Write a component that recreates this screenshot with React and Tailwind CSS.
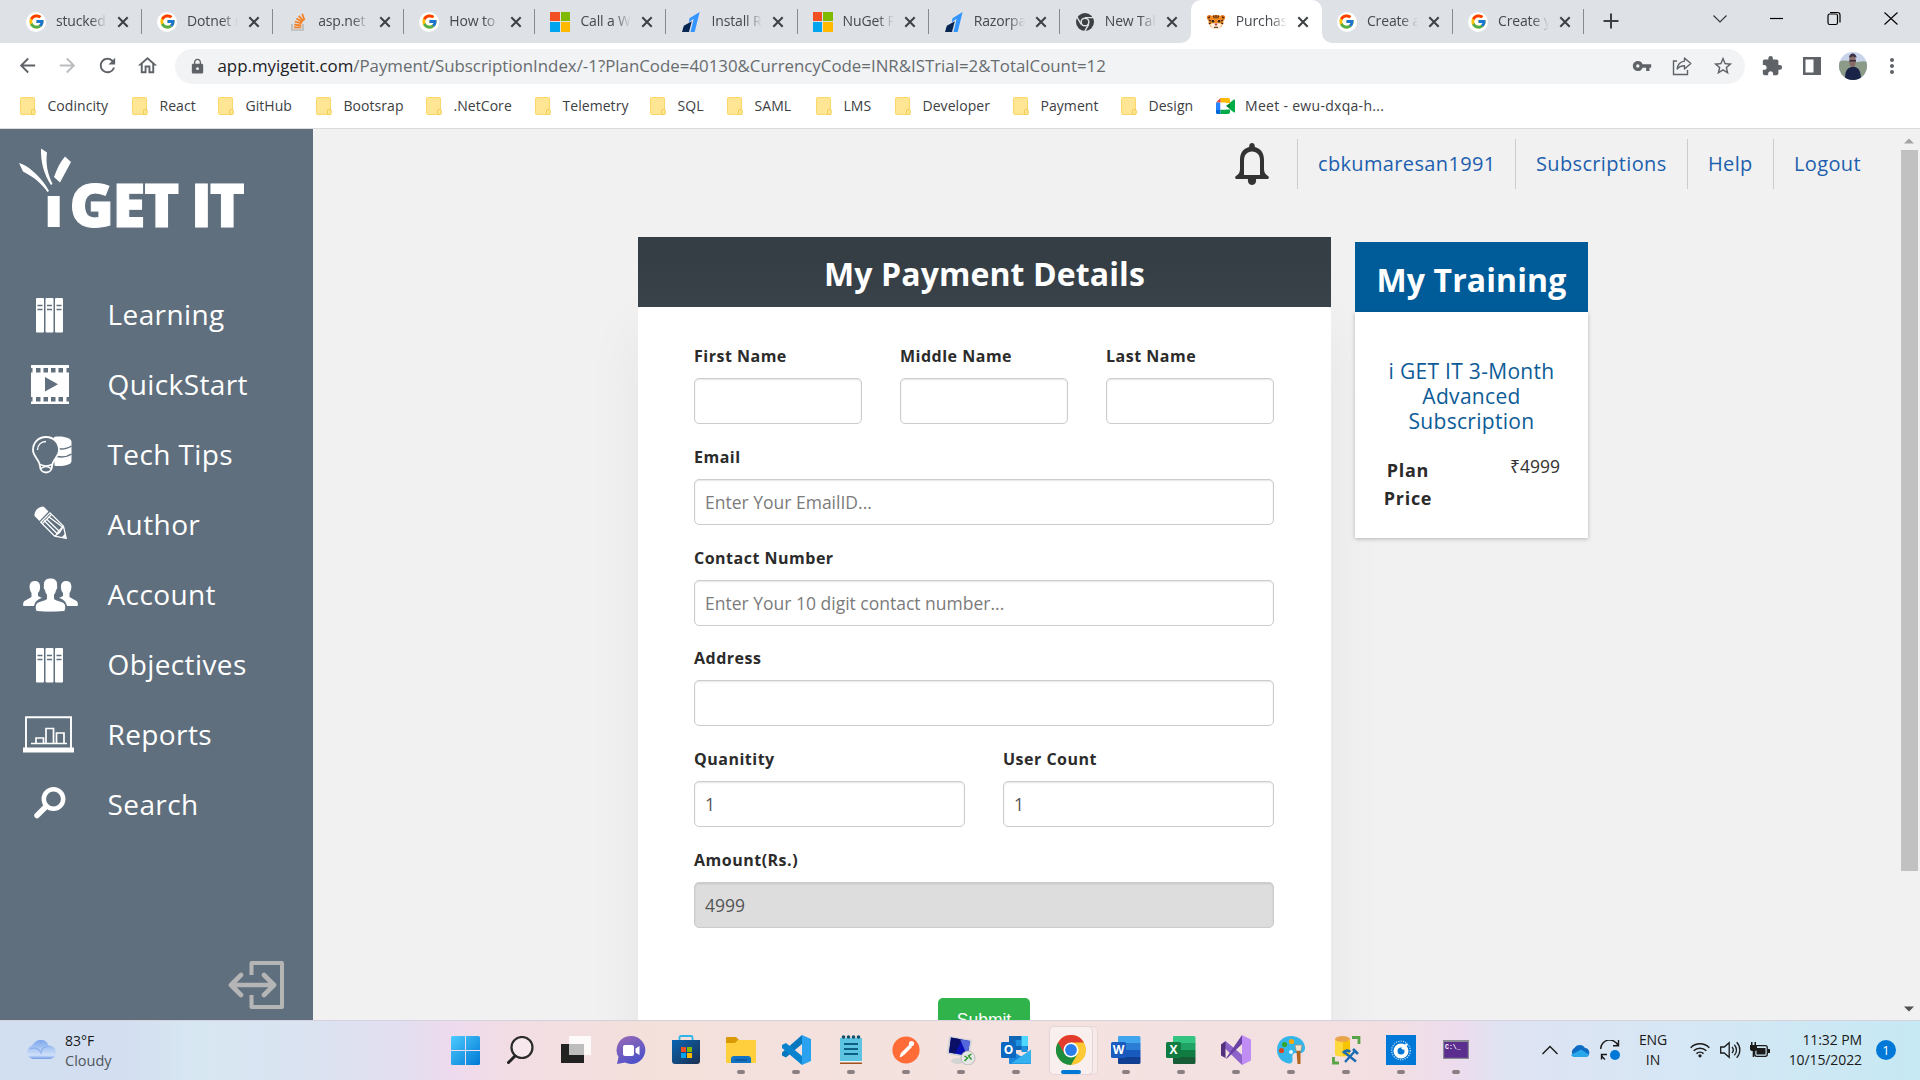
import React from "react";
import { FcGoogle } from "react-icons/fc";
import { MdVpnKey, MdStarBorder, MdExtension, MdLock, MdArrowBack, MdArrowForward, MdRefresh, MdOutlineHome, MdMoreVert } from "react-icons/md";

/* ---------- favicons ---------- */
const Google = () => (
  <span className="flex h-5 w-5 items-center justify-center rounded-full bg-white"><FcGoogle size={17} /></span>
);
const StackOverflow = () => (
  <svg width="20" height="20" viewBox="0 0 20 20" fill="none">
    <path d="M4 12v6h11v-6" stroke="#bcbbbb" strokeWidth="1.7" />
    <g stroke="#f48024" strokeWidth="1.8">
      <path d="M6 15.4h7.2M6.2 12.6l7.1.8M6.9 9.6l6.8 1.9M8.4 6.5l6.1 3.6M10.8 3.8l4.6 5.4M14.2 1.8l2.3 6.4" />
    </g>
  </svg>
);
const Microsoft = () => (
  <span className="grid h-5 w-5 grid-cols-2 gap-[1px]">
    <i className="bg-[#f25022]" /><i className="bg-[#7fba00]" /><i className="bg-[#00a4ef]" /><i className="bg-[#ffb900]" />
  </span>
);
const Razorpay = () => (
  <svg width="20" height="20" viewBox="0 0 20 20">
    <path d="M8.5 6.2 18.6 0l-4.9 20H9.5l3.2-13.2-4.9 3.4z" fill="#3395ff" />
    <path d="m2.8 13.8 8-4.6L8 20H1z" fill="#072654" />
  </svg>
);
const ChromeGrey = () => (
  <svg width="20" height="20" viewBox="0 0 20 20">
    <circle cx="10" cy="10" r="9" fill="#3c4043" />
    <circle cx="10" cy="10" r="4.6" fill="#dee1e6" />
    <circle cx="10" cy="10" r="3.1" fill="#3c4043" />
    <path d="M10 5.6h8.2M6.2 12.3 2 5.2M13.8 12.3l-4.2 7" stroke="#dee1e6" strokeWidth="1.4" />
  </svg>
);
const Tiger = () => (
  <svg width="20" height="20" viewBox="0 0 20 20">
    <circle cx="3.4" cy="5.6" r="2.6" fill="#e8781c" /><circle cx="16.6" cy="5.6" r="2.6" fill="#e8781c" />
    <circle cx="3.4" cy="5.6" r="1.2" fill="#3a1d0c" /><circle cx="16.6" cy="5.6" r="1.2" fill="#3a1d0c" />
    <path d="M10 3c4.600 0 7.500 2.600 7.500 6.600S14 17 10 17s-7.500-3.400-7.500-7.400S5.400 3 10 3z" fill="#f58a22" />
    <path d="M4 12c2-1 4-1 6-1s4 0 6 1c-1 3.500-3.500 5-6 5s-5-1.500-6-5z" fill="#fff1dc" />
    <path d="M10 3v3.500M7.500 3.500 8.300 6M12.500 3.500 11.700 6M2.800 8l2.400 1M17.200 8l-2.400 1M2.800 11.500 5 11M17.200 11.500 15 11" stroke="#3a1d0c" strokeWidth="1.1" />
    <circle cx="7" cy="9.300" r="1.200" fill="#222" /><circle cx="13" cy="9.300" r="1.200" fill="#222" />
    <path d="M8.300 11.600h3.400L10 14z" fill="#b3261e" />
    <path d="M8 15.300h4" stroke="#3a1d0c" strokeWidth="1" />
  </svg>
);

const tabs = [
  [Google, "stucked"], [Google, "Dotnet r"], [StackOverflow, "asp.net"], [Google, "How to"],
  [Microsoft, "Call a We"], [Razorpay, "Install R"], [Microsoft, "NuGet P"], [Razorpay, "Razorpay"],
  [ChromeGrey, "New Tab"], [Tiger, "Purchase"], [Google, "Create a"], [Google, "Create y"],
];

const XIcon = () => (
  <svg width="12" height="12" viewBox="0 0 12 12" stroke="#3c4043" strokeWidth="2"><path d="m1.300 1.300 9.400 9.400M10.700 1.300 1.300 10.700" /></svg>
);

function TabStrip() {
  return (
    <div className="flex h-[43px] bg-[#dee1e6]">
      <div className="flex pl-[11px]">
        {tabs.map(([Icon, title], i) => {
          const active = i === 9;
          return (
            <div key={i} className={"relative flex h-[43px] w-[131.1px] shrink-0 items-center pl-[15px] " + (active ? "rounded-t-[10px] bg-white" : "")}>
              <Icon />
              <span className="ml-[10px] mb-px w-[51px] overflow-hidden whitespace-nowrap text-[14px] leading-5 tracking-[-0.15px] text-[#45494d] [mask-image:linear-gradient(to_right,#000_68%,transparent)]">{title}</span>
              <span className="ml-[10px]"><XIcon /></span>
              {i !== 8 && !active && <i className="absolute right-0 top-[9px] h-[25px] w-px bg-[#868a8f]" />}
              {active && (
                <>
                  <svg className="absolute bottom-0 -left-[10px]" width="10" height="10"><path d="M10 0v10H0A10 10 0 0 0 10 0z" fill="#fff" /></svg>
                  <svg className="absolute bottom-0 -right-[10px]" width="10" height="10"><path d="M0 0v10h10A10 10 0 0 1 0 0z" fill="#fff" /></svg>
                </>
              )}
            </div>
          );
        })}
      </div>
      <svg className="ml-[19px] mt-[13px]" width="16" height="16" stroke="#3c4043" strokeWidth="2"><path d="M8 0.500v15M0.500 8h15" /></svg>
      <div className="ml-auto flex gap-[37px] pr-[19px] pt-[8px]">
        <svg width="20" height="20" fill="none" stroke="#333" strokeWidth="1.100"><path d="m3.500 7.500 6.500 6.500 6.500-6.500" /></svg>
        <svg width="20" height="20" fill="none" stroke="#000" strokeWidth="1.200"><path d="M3 10.500h13" /></svg>
        <svg width="20" height="20" fill="none" stroke="#000" strokeWidth="1.200"><rect x="4" y="6" width="9.500" height="10.500" rx="1.800" /><path d="M6 4.500h7.500a2.500 2.500 0 0 1 2.500 2.500v7.500" /></svg>
        <svg width="20" height="20" fill="none" stroke="#000" strokeWidth="1.100"><path d="m3.500 4.500 13 12M16.500 4.500l-13 12" /></svg>
      </div>
    </div>
  );
}

function Toolbar() {
  return (
    <div className="flex h-[45px] items-center bg-white pl-[16px] text-[#5f6368]">
      <div className="flex w-[159px] gap-[17px]">
        <MdArrowBack size={23} /><MdArrowForward size={23} color="#babcbe" /><MdRefresh size={23} /><MdOutlineHome size={23} />
      </div>
      <div className="mt-px flex h-[35px] w-[1570px] items-center rounded-full bg-[#f1f3f4] pl-[14px]">
        <MdLock size={17} />
        <div className="ml-[11.500px] mb-px whitespace-nowrap text-[16.850px] leading-6 text-[#686c70]">
          <span className="text-[#202124]">app.myigetit.com</span>/Payment/SubscriptionIndex/-1?PlanCode=40130&amp;CurrencyCode=INR&amp;ISTrial=2&amp;TotalCount=12
        </div>
        <div className="ml-auto flex items-center gap-[20px] pr-[11px]">
          <MdVpnKey size={20} />
          <svg width="20" height="20" viewBox="0 0 20 20" fill="none" stroke="#5f6368" strokeWidth="1.400">
            <path d="M5 5H1.500v13.500h14V14" /><path d="M12.500 2l6.300 5.500-6.300 5.500v-3.200c-3.400 0-5.800 1-7.300 3.200.5-4.600 2.800-7.300 7.300-7.900z" strokeLinejoin="round" />
          </svg>
          <MdStarBorder size={22} />
        </div>
      </div>
      <MdExtension className="ml-[16px]" size={22} />
      <svg className="ml-[20px]" width="18" height="18"><path d="M0 0h18v18H0z" fill="#5f6368" /><path d="M2.500 2.500h8v13h-8z" fill="#fff" /></svg>
      <svg className="ml-[18px]" width="28" height="28" viewBox="0 0 28 28">
        <defs><clipPath id="av"><circle cx="14" cy="14" r="14" /></clipPath></defs>
        <g clipPath="url(#av)">
          <path d="M0 0h28v28H0z" fill="#c8d3ea" /><path d="M0 10c5-3 9-1 14 0s10-2 14 0v18H0z" fill="#8c9a88" />
          <path d="M6 28c0-8 1-12 8-13.500 6 .5 8 5 8 13.500z" fill="#1a2348" />
          <ellipse cx="13.500" cy="9" rx="3.400" ry="6" fill="#8a6a66" /><path d="M10 6c0-6 7.500-6 7.500 0-3-2-5-2-7.500 0z" fill="#3a3244" />
          <path d="M10.500 8.800h6.500" stroke="#322c3c" strokeWidth="1.400" />
        </g>
      </svg>
      <MdMoreVert className="ml-[13px]" size={24} />
    </div>
  );
}

const bookmarks = [
  ["Codincity", "w-[112px]"], ["React", "w-[86px]"], ["GitHub", "w-[98px]"], ["Bootsrap", "w-[110px]"], [".NetCore", "w-[109px]"],
  ["Telemetry", "w-[115px]"], ["SQL", "w-[77px]"], ["SAML", "w-[89px]"], ["LMS", "w-[79px]"], ["Developer", "w-[118px]"],
  ["Payment", "w-[108px]"], ["Design", "w-[95px]"], ["Meet - ewu-dxqa-h...", "w-[200px]"],
];
function Bookmarks() {
  return (
    <div className="flex h-[41px] items-center border-b border-[#dcdcdf] bg-white pb-[4px] pl-[20px]">
      {bookmarks.map(([t, w], i) => (
        <div key={i} className={"flex shrink-0 items-center whitespace-nowrap text-[14px] leading-5 text-[#3c4043] " + w}>
          {i < 12 ? (
            <svg width="16" height="18" viewBox="0 0 16 18"><rect x=".5" y=".5" width="14" height="17" rx="1" fill="#ffe694" stroke="#fbd768" /><rect x="11.500" y="12.500" width="3.700" height="5" rx="1" fill="#ffe694" stroke="#f2c94c" /></svg>
          ) : (
            <svg width="19" height="16" viewBox="0 0 19 16">
              <path d="M4.500 0H12a2 2 0 0 1 2 2v3H4.500z" fill="#ffba00" /><path d="M0 4.500 4.500 0v4.500z" fill="#ea4335" />
              <path d="M0 4.500h4.500V12H0z" fill="#2684fc" /><path d="M0 12h4.500v4H1.500A1.500 1.500 0 0 1 0 14.500z" fill="#0066da" />
              <path d="M4.500 11.500H14V14a2 2 0 0 1-2 2H4.500z" fill="#00ac47" /><path d="M14 5v6l-4-3z" fill="#00832d" /><path d="m14 4.500 4-3c.4-.3 1 0 1 .5v12c0 .5-.6.800-1 .5l-4-3z" fill="#00ac47" /><path d="M4.500 4.500H10v7H4.500z" fill="#fff" />
            </svg>
          )}
          <span className={i < 12 ? "ml-[11.500px] tracking-[0.05px]" : "ml-[10px] tracking-[0.3px]"}>{t}</span>
        </div>
      ))}
    </div>
  );
}

/* ---------- sidebar icons ---------- */
const Books = () => (
  <svg width="27" height="35" viewBox="0 0 27 35">
    {[0, 9.500, 19].map((x) => (
      <g key={x}><rect x={x} y="0" width="8" height="34.500" rx="1" fill="#fff" /><path d={`M${x + 1.500} 7.500h5M${x + 1.500} 11.500h5`} stroke="#5f6f7e" strokeWidth="1.300" /></g>
    ))}
  </svg>
);
const Film = () => (
  <svg width="38" height="39" viewBox="0 0 38 39">
    <path d="M0 0h38v39H0z" fill="#fff" />
    {[5, 12.500, 20, 27.500].map((x) => (
      <g key={x} fill="#5f6f7e"><rect x={x} y="3" width="4.500" height="4.500" /><rect x={x} y="32" width="4.500" height="4.500" /></g>
    ))}
    <g fill="#5f6f7e"><rect x="0" y="3" width="1.500" height="4.500" /><rect x="0" y="32" width="1.500" height="4.500" /><rect x="35.500" y="3" width="2.500" height="4.500" /><rect x="35.500" y="32" width="2.500" height="4.500" /></g>
    <path d="M14 12v14.500l13-7.200z" fill="#5f6f7e" />
  </svg>
);
const Bulb = () => (
  <svg width="40" height="38" viewBox="0 0 40 38" fill="none">
    <path d="M22 1c9-1.500 17.500 1 17.500 5v19c0 4-9 5.800-17 4.800z" fill="#fff" />
    <path d="M24 12.500c6 1 12 0 15.500-2.500M25 20.500c5 .8 11 0 14.500-2.500" stroke="#5f6f7e" strokeWidth="1.500" />
    <path d="M14 1c-8 0-13 6-13 13 0 6.500 6.500 9.500 7 16 0 4 2.500 6.500 6 6.500s6-2.500 6-6.500c.5-6.500 7-9.500 7-16 0-7-5-13-13-13z" fill="#5f6f7e" stroke="#fff" strokeWidth="1.800" />
    <path d="M5.500 14c0-5 3.500-8.500 8.500-8.500M8 28.500c4 1.800 8 1.800 12 0M9 32.500c3-2.500 7-2.500 10 0" stroke="#fff" strokeWidth="1.400" />
  </svg>
);
const Pencil = () => (
  <svg width="33" height="33" viewBox="0 0 33 33" fill="none">
    <path d="M0.500 8.500C1 4 5 .5 9.500.5l5 5L5.500 15l-5-5z" fill="#fff" />
    <path d="M6.800 16.200 16 6.800l13.500 13.500 2.700 12-11.500-2.200z" stroke="#fff" strokeWidth="1.300" />
    <path d="m8.500 17.500 9-9M10 14.500l13 13 5.500-6.500L15 11M12.500 13l12.500 12M21 30l4.500-3.500L29 21" stroke="#fff" strokeWidth="1.300" /><path d="m27.500 31.500 4.700.8-1-4.800z" fill="#fff" />
  </svg>
);
const People = () => (
  <svg width="55" height="34" viewBox="0 0 55 34" fill="#fff">
    <path d="M11.500 3c4 0 6 2.500 5.500 7 0 2-1 4-2 5v3l4 2c-5 1.500-7 4-8 8H1c-1.500 0-1-4 .5-5L8.500 19v-4C6 12 5 3 11.500 3z" />
    <path d="M43.500 3c-4 0-6 2.500-5.500 7 0 2 1 4 2 5v3l-4 2c5 1.500 7 4 8 8h10c1.500 0 1-4-.5-5L46.500 19v-4C49 12 50 3 43.500 3z" />
    <path d="M27.500 0c5 0 7.500 3 7 8 .8 1 .2 3-1 4-.3 2-1 3.500-2 4.500v4.500c3 2 9.500 2 11 6 .5 2 .3 6-1.500 6.500-8 .8-20 .8-27 0C12 33 12 29 12.500 27c1.500-4 8-4 11-6v-4.500c-1-1-1.700-2.500-2-4.500-1.200-1-1.800-3-1-4-.5-5 2-8 7-8z" stroke="#5f6f7e" strokeWidth="1" />
  </svg>
);
const Report = () => (
  <svg width="51" height="37" viewBox="0 0 51 37" fill="none" stroke="#fff">
    <path d="M3 32V1.300h45V32" strokeWidth="1.900" /><path d="M0 34h51" strokeWidth="5" />
    <path d="M8 27.500h36M13 27v-5h7.500v5M23 27V12.500h7.500V27M33.500 27V17H41v10" strokeWidth="1.700" />
  </svg>
);
const SearchBig = () => (
  <svg width="32" height="32" viewBox="0 0 32 32" fill="none" stroke="#fff" strokeLinecap="round"><circle cx="19.500" cy="12" r="9.700" strokeWidth="4.500" /><path d="m12 19.500-9 9" strokeWidth="5.500" /></svg>
);

const menu = [
  [Books, "Learning", "", ""], [Film, "QuickStart", "", "-mt-[2px]"], [Bulb, "Tech Tips", "pl-[4px]", ""], [Pencil, "Author", "pl-px", "-mt-[5px]"],
  [People, "Account", "pl-px", "-mt-[1px]"], [Books, "Objectives", "", ""], [Report, "Reports", "pr-[3px]", "-mt-[1px]"], [SearchBig, "Search", "", "-mt-[5px]"],
];

function Sidebar() {
  return (
    <aside className="flex w-[313px] shrink-0 flex-col bg-[#5f6f7e]">
      <svg className="shrink-0" width="260" height="110" viewBox="0 129 260 110" fill="#fff" fontFamily="'Open Sans', sans-serif" fontWeight="800" fontSize="60">
        <path d="M19 163c5 1.500 9 4 13 7.500 8 7 13 13 17 20.500l-1.500 1C42 184 34 177 23 171.500z" />
        <path d="M41 148.500l6 4c-1.500 11 .5 21 5.500 31.500l-1.500 1C44 175 40.500 161 41 148.500z" />
        <path d="M65 156.500l6 5.500-11 20.500-6-5.500c3-8 6-15 11-20.500z" />
        <path d="M47.700 196h12v31h-12z" />
        <text x="69.500" y="227" textLength="110" stroke="#fff" strokeWidth="1">GET</text>
        <text x="191" y="227" textLength="54" stroke="#fff" strokeWidth="1">IT</text>
      </svg>
      <nav className="mt-[41px] flex flex-col">
        {menu.map(([Icon, label, pad, top], i) => (
          <div key={i} className="flex h-[70px] items-center">
            <span className={"flex w-[99px] justify-center " + pad + " " + top}><Icon /></span>
            <span className="ml-[8.500px] pb-[3px] text-[28px] leading-[38px] tracking-[0.4px] text-white">{label}</span>
          </div>
        ))}
      </nav>
      <svg className="mb-[10px] ml-auto mr-[28px] mt-auto" width="58" height="50" viewBox="0 0 58 50" fill="none" stroke="#b5b5b5" strokeWidth="4">
        <path d="M24.500 15V3H55v44H24.500V35" strokeLinejoin="round" /><path d="M5 25h42M14 15 4 25l10 10M37 15l10 10-10 10" strokeWidth="4.600" strokeLinecap="round" strokeLinejoin="round" />
      </svg>
    </aside>
  );
}

const inputBase = "mt-[11px] flex h-[46px] items-center rounded-[5px] border border-[#ccc] px-[10px] text-[17.5px] leading-6 shadow-[inset_0_1px_2px_rgba(0,0,0,0.1)] ";
function Field({ label, value, placeholder, grey }) {
  return (
    <div className="flex-1">
      <div className="h-[22px] text-[16px] font-bold leading-[22px] tracking-[0.5px] text-[#2b2b2b]">{label}</div>
      <div className={inputBase + (grey ? "bg-[#ddd]" : "bg-white")}>
        {placeholder ? <span className="text-[#7b7b7b]">{placeholder}</span> : <span className="text-[#555]">{value}</span>}
      </div>
    </div>
  );
}

function Main() {
  return (
    <main className="flex min-w-0 flex-1 flex-col overflow-hidden bg-[#f1f1f1]">
      <div className="mt-[10px] flex h-[50px] shrink-0 items-center justify-end pr-[19px]">
        <svg className="mr-[28px]" width="34" height="43" viewBox="0 0 34 43">
          <path d="M17 0c2 0 3 1.500 2.800 4C26 5.500 29 10 29 17v9c0 3 1 5 4 7 1.500 1 1 3-.5 3H1.500c-1.500 0-2-2-.5-3 3-2 4-4 4-7v-9C5 10 8 5.500 14.200 4 14 1.500 15 0 17 0z" fill="#333" />
          <path d="M17 8.500c-5 0-8 3.500-8 9V32h16V17.500c0-5.500-3-9-8-9z" fill="#f1f1f1" /><path d="M13 36h8c.5 3-1 6-4 6s-4.500-3-4-6z" fill="#333" />
        </svg>
        {[["cbkumaresan1991", "w-[218px]"], ["Subscriptions", "w-[172px]"], ["Help", "w-[86px]"], ["Logout", "w-[107px]"]].map(([t, w]) => (
          <a key={t} className={"flex h-[50px] items-center border-l border-[#ccc] pl-[20px] text-[20px] leading-6 tracking-[0.35px] text-[#1d5fae] " + w}>{t}</a>
        ))}
      </div>
      <div className="flex pl-[325px] pt-[48px]">
        <section className="w-[693px] shrink-0">
          <h2 className="flex h-[70px] items-center justify-center bg-[linear-gradient(#343e44_40%,#3a444a)] pt-[4px] text-[32px] font-bold tracking-[0.1px] text-white">My Payment Details</h2>
          <div className="flex h-[800px] flex-col gap-[21.800px] rounded-t-[4px] bg-white pl-[56px] pr-[57px] pt-[38px] shadow-[0_20px_60px_rgba(0,0,0,0.05)]">
            <div className="flex gap-[38px]"><Field label="First Name" /><Field label="Middle Name" /><Field label="Last Name" /></div>
            <div className="flex"><Field label="Email" placeholder="Enter Your EmailID..." /></div>
            <div className="flex"><Field label="Contact Number" placeholder="Enter Your 10 digit contact number..." /></div>
            <div className="flex"><Field label="Address" /></div>
            <div className="flex gap-[38px]"><Field label="Quanitity" value="1" /><Field label="User Count" value="1" /></div>
            <div className="flex"><Field label="Amount(Rs.)" value="4999" grey /></div>
            <button className="mx-auto mt-[48px] h-[44px] w-[92px] shrink-0 rounded-[5px] bg-[#2fb34a] font-['Liberation_Sans',sans-serif] text-[17.5px] text-white">Submit</button>
          </div>
        </section>
        <section className="ml-[24px] mt-[5px] w-[233px] shrink-0">
          <h2 className="flex h-[70px] items-center justify-center bg-[#005c99] pt-[5px] text-[32px] font-bold tracking-[0.1px] text-white">My Training</h2>
          <div className="h-[226px] bg-white pt-[47px] shadow-[0_1px_4px_rgba(0,0,0,0.25)]">
            <p className="text-center text-[21px] leading-[25px] tracking-[0.3px] text-[#0d5c97]">i GET IT 3-Month<br />Advanced<br />Subscription</p>
            <div className="mt-[22px] flex">
              <b className="w-[106px] text-center text-[18px] leading-[28px] tracking-[0.7px] text-[#2b2b2b]">Plan<br />Price</b>
              <span className="ml-[49px] -mt-[3px] text-[17.5px] leading-[26px] text-[#333]">₹4999</span>
            </div>
          </div>
        </section>
      </div>
    </main>
  );
}

function Scrollbar() {
  return (
    <div className="flex w-[21px] shrink-0 flex-col items-center bg-[#f1f1f1] pr-px">
      <svg className="mt-[9px]" width="10" height="6"><path d="M5 .5 10 5.500H0z" fill="#a3a3a3" /></svg>
      <div className="mt-[6px] h-[721px] w-[17px] bg-[#c1c1c1]" />
      <svg className="mb-[8px] mt-auto" width="10" height="6"><path d="M5 5.500 10 .5H0z" fill="#505050" /></svg>
    </div>
  );
}

/* ---------- taskbar icons ---------- */
const S = ({ children, w = 30, h = 30 }) => <svg width={w} height={h} viewBox={`0 0 ${w} ${h}`}>{children}</svg>;
const officeText = { fontFamily: "'Open Sans', sans-serif", fontWeight: 700, fontSize: 12, fill: "#fff", textAnchor: "middle" };
const WinLogo = () => (
  <S w={29} h={29}>
    <defs><linearGradient id="wl" x1="0" y1="0" x2="1" y2="1" gradientUnits="objectBoundingBox"><stop stopColor="#4ccbff" /><stop offset="1" stopColor="#0078d4" /></linearGradient></defs>
    <path d="M1.500 0H14v14H0V1.500A1.500 1.500 0 0 1 1.500 0zM15 0h12.500A1.500 1.500 0 0 1 29 1.500V14H15zM0 15h14v14H1.500A1.500 1.500 0 0 1 0 27.500zM15 15h14v12.500a1.500 1.500 0 0 1-1.500 1.500H15z" fill="url(#wl)" />
  </S>
);
const TSearch = () => <S w={27} h={28}><circle cx="15" cy="11.500" r="10.500" fill="#ffffff55" stroke="#2b2b2b" strokeWidth="2.200" /><path d="m8 20-6.500 6.500" stroke="#222" strokeWidth="3" strokeLinecap="round" /></S>;
const TaskView = () => <S><path d="M0 9h23v19H0z" fill="#222" /><path d="M8 1h22v19H8z" fill="#fff" fillOpacity=".85" /><path d="M8 9h15v11H8z" fill="#bdbdbd" /></S>;
const Chat = () => (
  <S><defs><linearGradient id="ch" x1="0" y1="0" x2="0.500" y2="1"><stop stopColor="#9b6bb5" /><stop offset="1" stopColor="#4f52c8" /></linearGradient></defs>
    <path d="M15 1a14 14 0 1 1-6 26.500L1 29l1.500-7A14 14 0 0 1 15 1z" fill="url(#ch)" /><rect x="7" y="10" width="11" height="11" rx="2" fill="#fff" /><path d="m19.500 13.500 4-2.500v9l-4-2.500z" fill="#fff" /></S>
);
const Store = () => (
  <S><defs><linearGradient id="st" x1="0" y1="0" x2="1" y2="1"><stop stopColor="#0a65b4" /><stop offset="1" stopColor="#1b3050" /></linearGradient></defs>
    <path d="M8.500 7V2.500A1.500 1.500 0 0 1 10 1h10a1.500 1.500 0 0 1 1.500 1.500V7" fill="none" stroke="#2fb5ea" strokeWidth="1.800" /><path d="M1 5h28v21a3 3 0 0 1-3 3H4a3 3 0 0 1-3-3z" fill="url(#st)" />
    <path d="M10 12h5v5h-5z" fill="#f25022" /><path d="M16 12h5v5h-5z" fill="#7fba00" /><path d="M10 18h5v5h-5z" fill="#00a4ef" /><path d="M16 18h5v5h-5z" fill="#ffb900" /></S>
);
const Folder = () => (
  <S><path d="M0 3a1 1 0 0 1 1-1h9l3 3v6H0z" fill="#d99a06" /><path d="M0 8h9l3-3h17a1 1 0 0 1 1 1v21a1 1 0 0 1-1 1H1a1 1 0 0 1-1-1z" fill="#ffcf3d" /><path d="M5 28v-4a3 3 0 0 1 3-3h14a3 3 0 0 1 3 3v4z" fill="#1273c4" /><path d="M9 25h12" stroke="#0b4d8c" strokeWidth="1.200" /></S>
);
const VSCode = () => (
  <S><path d="m21 0 9 4v22l-9 4z" fill="#2ba2f0" /><path d="M21 0v9L5 22.500 1 20.500v-3z" fill="#0878be" /><path d="M21 30v-9L5 8 1 10v3z" fill="#0a83cf" /></S>
);
const Notepad = () => (
  <S><path d="M4 3h22v23H4z" fill="#5cc3e0" /><path d="M4 26h22v1.500H4z" fill="#f2f2f2" /><path d="M4 27.500h22V29H4z" fill="#a4501c" /><path d="M8 9h14M8 14h14M8 19h14" stroke="#0d5e82" strokeWidth="1.800" />
    {[7, 12, 17, 22].map((x) => <circle key={x} cx={x + 0.500} cy="2" r="1.800" fill="#12506c" />)}</S>
);
const Postman = () => (
  <S><circle cx="15" cy="15" r="13.600" fill="#ff6c37" /><path d="m9 22 1.500-4 8-8 2 2-8 8zM13 17l7-6" fill="#fff" stroke="#fff" strokeWidth="1" /><circle cx="20.500" cy="8.500" r="2.600" fill="#fff" /></S>
);
const Rdp = () => (
  <S><ellipse cx="12" cy="26" rx="7" ry="3" fill="#d4d4d4" /><path d="m3 1 23 4-3 18-22-4z" fill="#cfd3d8" /><path d="m5 2.500 19 3.500-2.500 15L3 17.500z" fill="#0a10b4" /><path d="m5 2.500 11 2L9 18.500l-6-1z" fill="#0b0f66" /><path d="m14 4.200 10 1.800-2.500 15z" fill="#5468dc" />
    <circle cx="22" cy="23" r="7" fill="#e6e6e6" stroke="#aaa" strokeWidth=".7" /><path d="m18.500 21 3 2-3 3M25.500 19l-3 2 3 3.500" fill="none" stroke="#2e9a2e" strokeWidth="1.500" /></S>
);
const Office = ({ l, a, b, c, d, tile }) => (
  <S><path d="M8 1h20a1.500 1.500 0 0 1 1.500 1.500V8H7V2a1 1 0 0 1 1-1z" fill={a} /><path d="M7 8h22.500v7H7z" fill={b} /><path d="M7 15h22.500v7H7z" fill={c} /><path d="M7 22h22.500v5.500A1.500 1.500 0 0 1 28 29H8a1 1 0 0 1-1-1z" fill={d} />
    <rect x="0" y="7" width="15" height="16" rx="1.500" fill={tile} /><text x="7.500" y="19.300" style={officeText}>{l}</text></S>
);
const Outlook = () => (
  <S><path d="M8 1h19v14H8z" fill="#1066b5" /><path d="M14.500 5h6v6h-6zM20.500 11h6v6h-6z" fill="#1d91df" /><path d="M20.500 1h6.500v10h-6.500z" fill="#4fd8ff" /><path d="M8 14.500 30 27v1a1 1 0 0 1-1 1H9a1 1 0 0 1-1-1z" fill="#1a86dc" /><path d="m30 14.500-20 14h19a1 1 0 0 0 1-1z" fill="#35b1ef" />
    <rect x="0" y="7" width="15" height="16" rx="1.500" fill="#0b68c0" /><text x="7.500" y="19.300" style={officeText}>O</text></S>
);
const Chrome = () => (
  <S><circle cx="15" cy="15" r="15" fill="#fcc934" /><path d="M2 7.500A15 15 0 0 0 15 30l6.500-11.200-6.500-3.800z" fill="#1e8e3e" /><path d="M2 7.500a15 15 0 0 1 26 0H15l-6.500 11.200z" fill="#e33b2e" />
    <circle cx="15" cy="15" r="7.500" fill="#fff" /><circle cx="15" cy="15" r="5.900" fill="#2b7de9" /></S>
);
const VisualStudio = () => (
  <S><path d="M0 9.500 4.500 6 26 24l-5 6z" fill="#8d62c9" /><path d="m0 9.500 4.500-3V23L0 20.500z" fill="#52307c" /><path d="M4.500 24 21 0v9L6.500 23z" fill="#6a40a5" /><path d="m21 0 9 4.500v21L21 30z" fill="#c08df5" /></S>
);
const Paint = () => (
  <S><path d="M15 1c8 0 14 5 14 12 0 4-3 6-8 5-4-.5-5 2-4.500 5 .5 4-1 6-4 5.500C5 27 1 21 1 15 1 7 7 1 15 1z" fill="#35b6ea" /><circle cx="15.500" cy="6.500" r="2.600" fill="#f7a90c" /><circle cx="8.500" cy="9.500" r="2.600" fill="#36a52c" /><circle cx="5.500" cy="15.500" r="2.600" fill="#d9481c" /><circle cx="15" cy="17" r="2" fill="#e8f6fc" />
    <path d="M20.500 16h4v13h-3z" fill="#b0641c" /><path d="M19 10h7l-1 6h-5z" fill="#eee0cc" stroke="#9a8064" strokeWidth=".6" /></S>
);
const Ssms = () => (
  <S><path d="M4 4h15v16c-4 2-11 2-15 0z" fill="#ffd83b" /><path d="M12 6h7v13c-2 1-4 1.500-7 1.500z" fill="#f8c400" /><ellipse cx="11.500" cy="4" rx="7.500" ry="3" fill="#e8a54e" /><path d="M21 2.500h7V9M8 28H2.500v-6" fill="none" stroke="#57a346" strokeWidth="2.800" /><path d="m14 27 10-11M13 17l12 9.500" stroke="#1c6cb4" strokeWidth="2.400" /><path d="M12 18c2-3 6-3 7-1M22 14l5 5" stroke="#1c6cb4" strokeWidth="2.800" fill="none" /></S>
);
const Azure = () => (
  <S><path d="M0 0h30v30H0z" fill="#0078d7" /><circle cx="15" cy="15.500" r="9.300" fill="none" stroke="#fff" strokeWidth="1.200" strokeDasharray="1.100 1.300" strokeOpacity=".8" /><circle cx="15" cy="16" r="5.500" fill="none" stroke="#fff" strokeWidth="4" /><path d="m14 17 7-8" stroke="#fff" strokeWidth="2.600" /><circle cx="15" cy="16" r="2.200" fill="#0078d7" /></S>
);
const Cmd = () => (
  <S><path d="M2 5h26v19H2z" fill="#8a8a92" /><path d="M3.200 7h23.600v15.800H3.200z" fill="#5b2d8e" /><text x="4" y="13.500" style={{ fontFamily: "'Liberation Mono', monospace", fontWeight: 700, fontSize: 6.5, fill: "#fff" }}>C:\_</text></S>
);

const apps = [
  [WinLogo, 0], [TSearch, 0], [TaskView, 0], [Chat, 0], [Store, 0], [Folder, 1], [VSCode, 1], [Notepad, 1], [Postman, 1], [Rdp, 1], [Outlook, 1], [Chrome, 2],
  [() => <Office l="W" a="#41a5ee" b="#2b7cd3" c="#185abd" d="#103f91" tile="#185abd" />, 1],
  [() => <Office l="X" a="#33c481" b="#21a366" c="#107c41" d="#185c37" tile="#107c41" />, 1],
  [VisualStudio, 1], [Paint, 1], [Ssms, 1], [Azure, 1], [Cmd, 1],
];

function Taskbar() {
  return (
    <footer className="flex h-[60px] border-t border-[#d5d2de] bg-[linear-gradient(to_right,#d2dff1_0,#d3dff0_130px,#d7e7f2_200px,#dae3f1_300px,#e2dff0_400px,#eddaee_450px,#f2dde4_510px,#f3e0db_640px,#f4e2e0_1000px,#f3dfe1_1380px,#ecdcee_1460px,#dfe3f2_1500px,#d5e7f5_1700px,#c6e9f3_1920px)] text-[14px] leading-5 text-[#1a1a1a]">
      <div className="flex w-[438px] items-start pl-[26px] pt-[10px]">
        <svg className="mt-[9px]" width="30" height="19" viewBox="0 0 30 19">
          <defs><linearGradient id="cl" x1="0" y1="0" x2="0" y2="1"><stop stopColor="#7da7ec" /><stop offset=".8" stopColor="#cfe0f8" /><stop offset="1" stopColor="#6f9be8" /></linearGradient></defs>
          <path d="M7 19a7 7 0 0 1-1-13.500C8 2 11 0 14.500 0 19 0 21.500 2 22.500 5.500 27 5.500 30 8.500 30 12.500S27 19 23 19z" fill="url(#cl)" /><path d="M4 9c5-2 9 0 11 4 1-5 4-7 8-6.500" fill="none" stroke="#8db2ee" strokeWidth="1.200" />
        </svg>
        <div className="ml-[9px]"><div>83°F</div><div className="text-[14.500px] text-[#50555c]">Cloudy</div></div>
      </div>
      <div className="flex">
        {apps.map(([Icon, st], i) => (
          <div key={i} className="relative flex w-[55.050px] items-center justify-center pb-px">
            {st === 2 && <><i className="absolute left-[8px] top-[5px] h-[49px] w-[46px] rounded-[5px] border border-[#e6d6d8] bg-white/30" /><i className="absolute left-[5px] top-[5px] h-[49px] w-[44px] rounded-[5px] border border-[#e4d4d6] bg-[#f9efef]" /></>}
            <span className="relative"><Icon /></span>
            {st === 1 && <i className="absolute bottom-[6px] h-[4px] w-[8px] rounded-full bg-[#8a8083]" />}
            {st === 2 && <i className="absolute bottom-[6px] h-[4px] w-[20px] rounded-full bg-[#0078d4]" />}
          </div>
        ))}
      </div>
      <div className="ml-auto flex items-center pb-px">
        <svg width="16" height="10" fill="none" stroke="#1a1a1a" strokeWidth="1.400"><path d="m.5 9 7.500-7.500L15.500 9" /></svg>
        <svg className="ml-[12px]" width="20" height="13" viewBox="0 0 20 13"><path d="M5 13a5 5 0 0 1-.5-9A6 6 0 0 1 15 4a4.600 4.600 0 0 1 1 9z" fill="#0f6cc4" /><path d="m1 11 10-5.500 8 5A3 3 0 0 1 16 13H5c-2 0-3-.5-4-2z" fill="#28a8ea" /></svg>
        <svg className="ml-[10px]" width="20" height="20" fill="none" stroke="#1a1a1a" strokeWidth="1.400"><path d="M.7 9A9 9 0 0 1 18 5.500M18.500 0v5.700H13M5 19.500A9 9 0 0 1 1.500 15M1.500 19.500v-5H7" /><circle cx="15" cy="15" r="5" fill="#0078d7" stroke="none" /></svg>
        <div className="ml-[15px] w-[36px] text-center tracking-[-0.1px]">ENG<br />IN</div>
        <svg className="ml-[19px]" width="20" height="16" fill="none" stroke="#1a1a1a" strokeWidth="1.500"><path d="M.7 5.700a13 13 0 0 1 18.600 0M3.700 8.800a9 9 0 0 1 12.600 0M6.500 11.600a5 5 0 0 1 7 0" /><circle cx="10" cy="13.800" r="1.600" fill="#1a1a1a" stroke="none" /></svg>
        <svg className="ml-[10px]" width="21" height="18" fill="none" stroke="#1a1a1a" strokeWidth="1.300"><path d="M.7 6v6h3.500l5 4.300V1.700L4.200 6zM12 6a4.500 4.500 0 0 1 0 6M14.300 3.700a7.500 7.500 0 0 1 0 10.600M16.700 1.300a11 11 0 0 1 0 15.400" /></svg>
        <svg className="ml-[9px]" width="20" height="16"><rect x="4.700" y="3.700" width="12.600" height="10.600" rx="2" fill="none" stroke="#1a1a1a" strokeWidth="1.300" /><path d="M6.500 6h9v6.500h-9zM18 7h2v4h-2zM0 3h7v4a2 2 0 0 1-2 2H2a2 2 0 0 1-2-2zM1 0h1.500v3H1zM4.500 0H6v3H4.500zM2.700 8h1.500v7H2.700z" fill="#1a1a1a" /></svg>
        <div className="w-[92px] text-right tracking-[-0.100px]">11:32 PM<br />10/15/2022</div>
        <div className="ml-[14px] mr-[24px] flex h-[20px] w-[20px] items-center justify-center rounded-full bg-[#0078d7] text-[13px] text-white">1</div>
      </div>
    </footer>
  );
}

export default function App() {
  return (
    <div className="flex h-[1080px] w-[1920px] flex-col overflow-hidden font-['Open_Sans','Noto_Sans',sans-serif]">
      <TabStrip />
      <Toolbar />
      <Bookmarks />
      <div className="flex h-[891px] overflow-hidden"><Sidebar /><Main /><Scrollbar /></div>
      <Taskbar />
    </div>
  );
}
